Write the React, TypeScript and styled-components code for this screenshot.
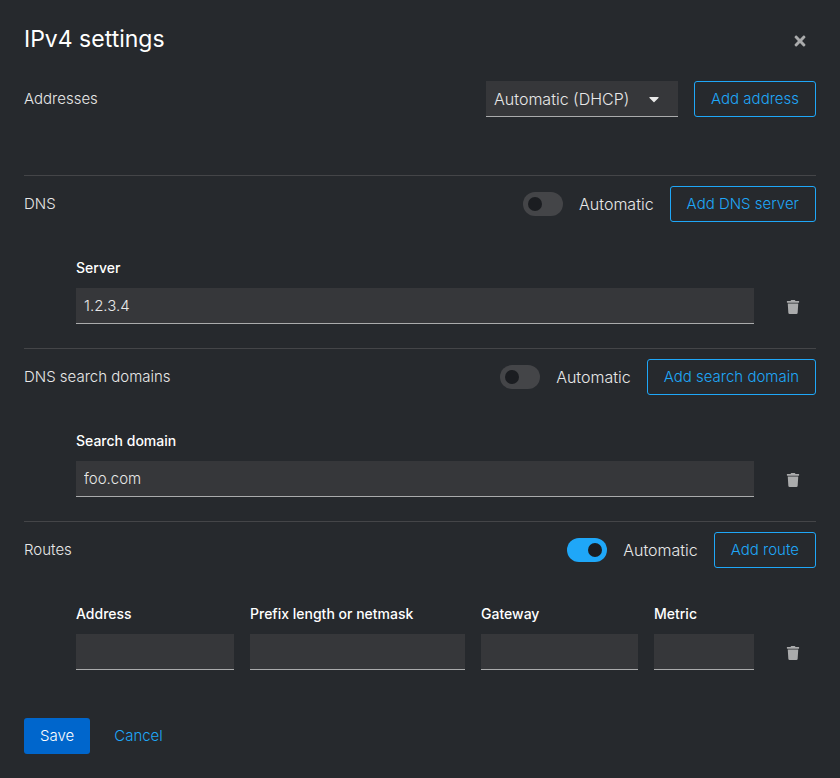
import React, { useId, useState } from 'react';
import type { ReactNode } from 'react';
import styled, { createGlobalStyle } from 'styled-components';
import { FaCaretDown, FaTimes, FaTrash } from 'react-icons/fa';

const color = {
  surface: '#26292d',
  field: '#36373a',
  line: '#444548',
  fieldLine: '#aaabac',
  text: '#e8e8e8',
  heading: '#ffffff',
  link: '#1fa7f8',
  primary: '#0066cc',
  knob: '#1b1d21',
};

const GlobalStyle = createGlobalStyle`
  *, *::before, *::after { box-sizing: border-box; }
  body {
    margin: 0;
    background: ${color.surface};
    color: ${color.text};
    font: 300 15px/24px Inter, sans-serif;
  }
  button, input, select { font: inherit; color: inherit; margin: 0; }
`;

const Dialog = styled.main`
  padding: 24px;
`;

const Header = styled.header`
  display: flex;
  align-items: center;
  justify-content: space-between;
  height: 33px;
  margin-bottom: 24px;
`;

const Title = styled.h1`
  align-self: flex-start;
  margin: 0;
  color: ${color.heading};
  font-size: 23px;
  font-weight: 400;
  line-height: 30px;
`;

const IconButton = styled.button`
  display: flex;
  align-items: center;
  justify-content: center;
  height: 36px;
  padding: 0 8px;
  border: 0;
  background: none;
  color: ${color.fieldLine};
  font-size: 16px;
  cursor: pointer;
`;

const DeleteButton = styled(IconButton)`
  flex: none;
  width: 46px;
  padding: 2px 0 0;
  font-size: 14px;
`;

const SectionBox = styled.section`
  padding: 10px 0 24px;
  border-top: 1px solid ${color.line};

  &:first-of-type {
    padding: 0 0 58px;
    border-top: 0;
  }
`;

const SectionHeader = styled.div`
  display: flex;
  align-items: center;
  gap: 16px;
`;

const SectionTitle = styled.h2`
  flex: 1;
  margin: 0;
  font-size: 15px;
  font-weight: 300;
`;

const Button = styled.button<{ $kind: 'outline' | 'primary' | 'link' }>`
  height: 36px;
  padding: 0 16px;
  border: ${p => (p.$kind === 'outline' ? `1px solid ${color.link}` : '0')};
  border-radius: 3px;
  background: ${p => (p.$kind === 'primary' ? color.primary : 'none')};
  color: ${p => (p.$kind === 'primary' ? color.heading : color.link)};
  white-space: nowrap;
  cursor: pointer;
`;

const SelectBox = styled.div`
  display: grid;
  grid-template-columns: 1fr 32px 8px;
  align-items: center;
  width: 192px;
  font-size: 16px;

  select { grid-area: 1 / 1 / 2 / 4; }
  svg {
    grid-area: 1 / 2;
    justify-self: center;
    pointer-events: none;
  }
`;

const Select = styled.select`
  width: 100%;
  height: 36px;
  padding: 0 8px;
  border: 0;
  border-bottom: 1px solid ${color.fieldLine};
  border-radius: 0;
  background: ${color.field};
  appearance: none;
`;

const SwitchLabel = styled.label`
  display: flex;
  align-items: center;
  gap: 16px;
  font-size: 16px;
`;

const Switch = styled.input`
  display: flex;
  align-items: center;
  width: 40px;
  height: 24px;
  padding: 0 5px;
  border-radius: 12px;
  background: ${color.line};
  appearance: none;
  cursor: pointer;

  &::before {
    content: '';
    width: 14px;
    height: 14px;
    border-radius: 50%;
    background: ${color.knob};
  }
  &:checked {
    justify-content: flex-end;
    background: ${color.link};
  }
`;

const Row = styled.div`
  display: flex;
  align-items: flex-end;
  gap: 16px;
  margin-top: 36px;
  padding-left: 52px;
`;

const Fields = styled.div<{ $columns: string }>`
  flex: 1;
  display: grid;
  grid-template-columns: ${p => p.$columns};
  gap: 16px;
`;

const FieldBox = styled.div`
  display: flex;
  flex-direction: column;
  gap: 10px;
  min-width: 0;
`;

const FieldLabel = styled.label`
  color: ${color.heading};
  font-size: 14px;
  font-weight: 500;
  line-height: 20px;
  white-space: nowrap;
`;

const TextInput = styled.input`
  width: 100%;
  height: 36px;
  padding: 0 8px;
  border: 0;
  border-bottom: 1px solid ${color.fieldLine};
  border-radius: 0;
  background: ${color.field};
`;

const Footer = styled.footer`
  display: flex;
  gap: 8px;
  margin-top: 24px;
`;

function Section({ title, action, children, control }: {
  title: string;
  action: string;
  control: ReactNode;
  children?: ReactNode;
}) {
  return (
    <SectionBox>
      <SectionHeader>
        <SectionTitle>{title}</SectionTitle>
        {control}
        <Button type="button" $kind="outline">{action}</Button>
      </SectionHeader>
      {children}
    </SectionBox>
  );
}

function AutomaticSwitch({ initial = false }: { initial?: boolean }) {
  const [on, setOn] = useState(initial);
  return (
    <SwitchLabel>
      <Switch type="checkbox" role="switch" checked={on} onChange={e => setOn(e.target.checked)} />
      Automatic
    </SwitchLabel>
  );
}

function Field({ label, value = '' }: { label: string; value?: string }) {
  const id = useId();
  return (
    <FieldBox>
      <FieldLabel htmlFor={id}>{label}</FieldLabel>
      <TextInput id={id} type="text" defaultValue={value} />
    </FieldBox>
  );
}

function FieldRow({ columns = 'minmax(0, 1fr)', children }: { columns?: string; children: ReactNode }) {
  return (
    <Row>
      <Fields $columns={columns}>{children}</Fields>
      <DeleteButton type="button" aria-label="Remove item"><FaTrash /></DeleteButton>
    </Row>
  );
}

export default function App() {
  return (
    <>
      <GlobalStyle />
      <Dialog>
        <Header>
          <Title>IPv4 settings</Title>
          <IconButton type="button" aria-label="Close"><FaTimes /></IconButton>
        </Header>

        <Section
          title="Addresses"
          action="Add address"
          control={
            <SelectBox>
              <Select aria-label="Select method" defaultValue="auto">
                <option value="auto">Automatic (DHCP)</option>
                <option value="link-local">Link local</option>
                <option value="manual">Manual</option>
                <option value="shared">Shared</option>
                <option value="disabled">Disabled</option>
              </Select>
              <FaCaretDown aria-hidden="true" />
            </SelectBox>
          }
        />

        <Section title="DNS" action="Add DNS server" control={<AutomaticSwitch />}>
          <FieldRow><Field label="Server" value="1.2.3.4" /></FieldRow>
        </Section>

        <Section title="DNS search domains" action="Add search domain" control={<AutomaticSwitch />}>
          <FieldRow><Field label="Search domain" value="foo.com" /></FieldRow>
        </Section>

        <Section title="Routes" action="Add route" control={<AutomaticSwitch initial />}>
          <FieldRow columns="158fr 215fr 157fr 100fr">
            <Field label="Address" />
            <Field label="Prefix length or netmask" />
            <Field label="Gateway" />
            <Field label="Metric" />
          </FieldRow>
        </Section>

        <Footer>
          <Button type="button" $kind="primary">Save</Button>
          <Button type="button" $kind="link">Cancel</Button>
        </Footer>
      </Dialog>
    </>
  );
}
